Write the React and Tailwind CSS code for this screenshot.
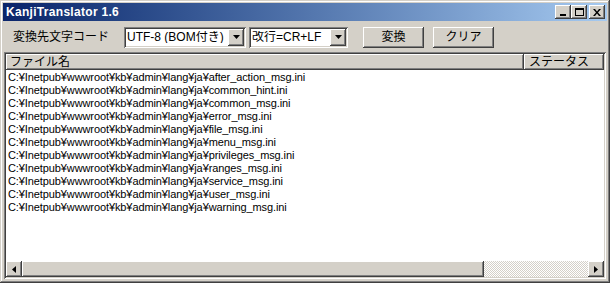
import React from 'react';

const files = [
  'after_action_msg.ini',
  'common_hint.ini',
  'common_msg.ini',
  'error_msg.ini',
  'file_msg.ini',
  'menu_msg.ini',
  'privileges_msg.ini',
  'ranges_msg.ini',
  'service_msg.ini',
  'user_msg.ini',
  'warning_msg.ini',
];

const raised = 'shadow-[inset_-1px_-1px_#404040,inset_1px_1px_#fff,inset_-2px_-2px_#808080,inset_2px_2px_#d4d0c8]';
const sunken = 'shadow-[inset_1px_1px_#808080,inset_-1px_-1px_#fff,inset_2px_2px_#404040,inset_-2px_-2px_#d4d0c8]';

const font = "font-['Liberation_Sans','Noto_Sans_CJK_JP',sans-serif]";

const Arrow = ({ dir }) => {
  const pts = {
    down: '0,0 7,0 3.5,4',
    left: '4,0 4,7 0,3.5',
    right: '0,0 0,7 4,3.5',
  }[dir];
  const size = dir === 'down' ? { w: 7, h: 4 } : { w: 4, h: 7 };
  return (
    <svg width={size.w} height={size.h} viewBox={`0 0 ${size.w} ${size.h}`}>
      <polygon points={pts} fill="#000" />
    </svg>
  );
};

const Combo = ({ width, text }) => (
  <div className={`${sunken} bg-white h-[21px] flex items-center p-[2px]`} style={{ width }}>
    <span className="flex-1 pl-[1px] text-[12px] leading-none text-black truncate">{text}</span>
    <div className={`${raised} bg-[#d4d0c8] w-[16px] h-[17px] flex items-center justify-center`}>
      <Arrow dir="down" />
    </div>
  </div>
);

const CaptionButton = ({ children, className = '' }) => (
  <div className={`${raised} bg-[#d4d0c8] w-[16px] h-[14px] flex items-center justify-center ${className}`}>
    {children}
  </div>
);

export default function App() {
  return (
    <div className={`${font} w-[610px] h-[283px] bg-[#d4d0c8] p-[3px] flex flex-col shadow-[inset_-1px_-1px_#404040,inset_1px_1px_#d4d0c8,inset_-2px_-2px_#808080,inset_2px_2px_#fff]`}>
      {/* title bar */}
      <div className="h-[18px] bg-gradient-to-r from-[#0a246a] to-[#a6caf0] flex items-center pl-[3px] pr-[2px]">
        <span className="flex-1 text-white font-bold text-[12px] leading-none tracking-[0.3px]">KanjiTranslator 1.6</span>
        <CaptionButton>
          <div className="w-[6px] h-[2px] bg-black mt-[6px] -ml-[1px]" />
        </CaptionButton>
        <CaptionButton>
          <div className="w-[9px] h-[8px] border border-black border-t-2" />
        </CaptionButton>
        <CaptionButton className="ml-[2px]">
          <svg width="8" height="7" viewBox="0 0 8 7">
            <path d="M0 0h2l2 2.5L6 0h2L5 3.5 8 7H6L4 4.5 2 7H0l3-3.5z" fill="#000" />
          </svg>
        </CaptionButton>
      </div>

      {/* toolbar */}
      <div className="h-[31px] flex items-center pt-[1px] text-[12px] text-black">
        <span className="ml-[10px] w-[111px]">変換先文字コード</span>
        <Combo width={122} text="UTF-8 (BOM付き)" />
        <div className="w-[3px]" />
        <Combo width={99} text="改行=CR+LF" />
        <button className={`${raised} bg-[#d4d0c8] ml-[15px] w-[61px] h-[21px] text-[12px]`}>変換</button>
        <button className={`${raised} bg-[#d4d0c8] ml-[9px] w-[61px] h-[21px] text-[12px]`}>クリア</button>
      </div>

      {/* list view */}
      <div className={`${sunken} ml-[1px] mr-[1px] flex-1 p-[2px] flex flex-col bg-white`}>
        <div className="flex h-[16px] text-[12px] text-black shrink-0">
          <div className={`${raised} bg-[#d4d0c8] w-[518px] pl-[4px] flex items-center leading-none`}>ファイル名</div>
          <div className={`${raised} bg-[#d4d0c8] flex-1 pl-[5px] flex items-center leading-none`}>ステータス</div>
        </div>
        <div className="flex-1 pt-[1px] pl-[2px] text-[11px] leading-[13px] tracking-[-0.1px] text-black">
          {files.map((f) => (
            <div key={f} className="h-[13px] whitespace-nowrap">
              C:¥Inetpub¥wwwroot¥kb¥admin¥lang¥ja¥{f}
            </div>
          ))}
        </div>
        {/* horizontal scrollbar */}
        <div className="h-[16px] flex shrink-0">
          <div className={`${raised} bg-[#d4d0c8] w-[16px] h-[16px] flex items-center justify-center`}>
            <Arrow dir="left" />
          </div>
          <div className={`${raised} bg-[#d4d0c8] w-[462px] h-[16px]`} />
          <div className="flex-1 h-[16px] bg-[repeating-conic-gradient(#d4d0c8_0%_25%,#fff_0%_50%)] bg-[length:2px_2px]" />
          <div className={`${raised} bg-[#d4d0c8] w-[16px] h-[16px] flex items-center justify-center`}>
            <Arrow dir="right" />
          </div>
        </div>
      </div>
      <div className="h-[1px]" />
    </div>
  );
}
